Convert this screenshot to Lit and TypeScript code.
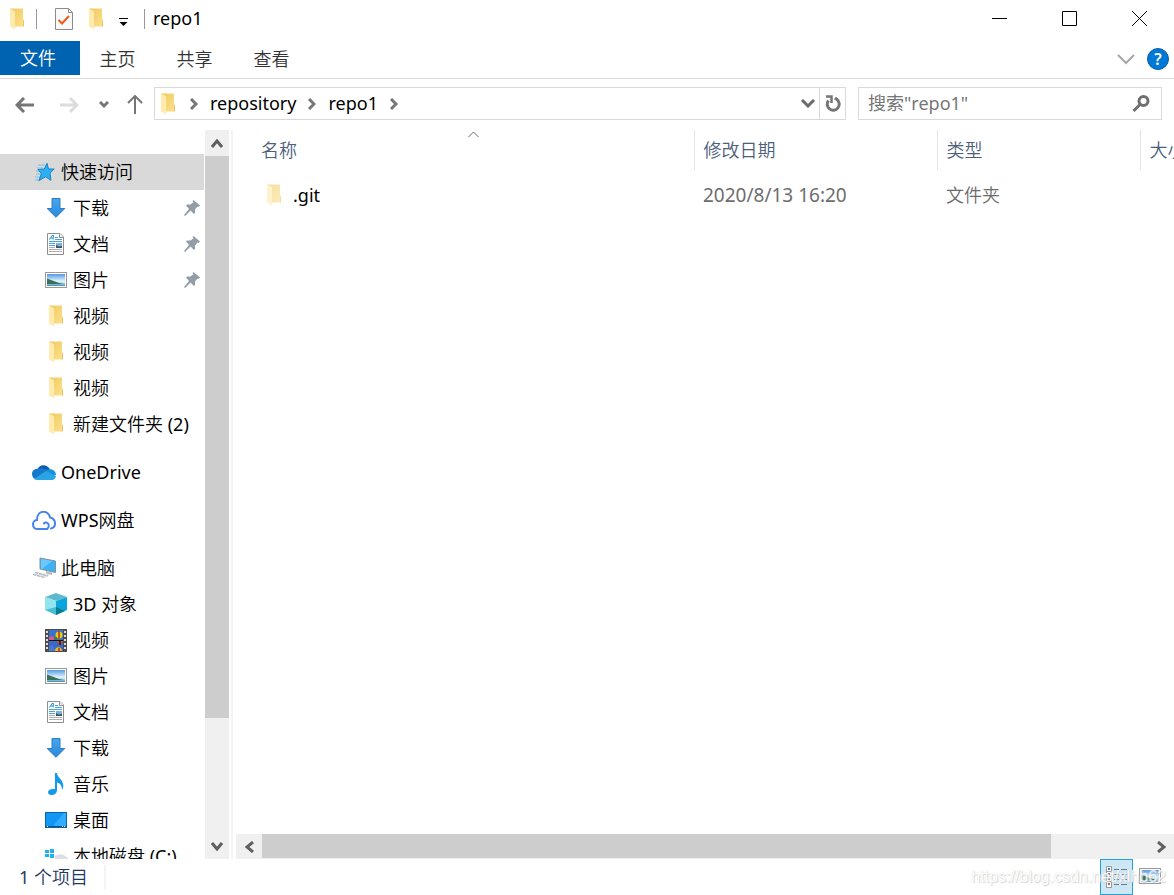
import { LitElement, html, css, nothing, TemplateResult } from "lit";
import { customElement } from "lit/decorators.js";

const folder = html`<svg width="14" height="22" viewBox="0 0 14 22">
  <defs><linearGradient id="f" x1="0" y1="0" x2="1" y2="1"><stop offset="0" stop-color="#f1ca62"/><stop offset="1" stop-color="#fbe08b"/></linearGradient></defs>
  <path d="M0 0.5H13V11L14 13V18.5H3Z" fill="url(#f)"/><path d="M0 0.5L5 3.5V21.5L0 18.5Z" fill="#ffebae"/><path d="M13 11L14 13V18.5H13Z" fill="#e9c569"/></svg>`;

const icons: Record<string, TemplateResult> = {
  folder,
  star: html`<svg width="22" height="20" viewBox="0 0 22 20">
    <path d="M5 3H12M4 6H10M3 9H6M3 12H8M2 15H7M2 18H6" stroke="#7cc0e6" stroke-width="1"/>
    <path d="M14 1.300L15.500 7H21.200L17 11L18 18.300L12.500 14.800L6 18.600L8.400 11.500L5 7.500L11.300 7Z" fill="#2cb0f5" stroke="#1b83c4" stroke-width="1"/></svg>`,
  down: html`<svg width="20" height="20" viewBox="0 0 20 20"><defs><linearGradient id="d" x1="0" y1="0" x2="0" y2="1"><stop offset="0" stop-color="#4aa5ec"/><stop offset="1" stop-color="#2789dc"/></linearGradient></defs>
    <path d="M6 0.5H14V10.5H18.8L10 19.3L1.200 10.5H6Z" fill="url(#d)" stroke="#2c7fc4"/></svg>`,
  doc: html`<svg width="18" height="22" viewBox="0 0 18 22"><path d="M.5 .5H13L16.500 4V21.500H.5Z" fill="#fff" stroke="#8e8e8e"/><path d="M12.500 .5V4.500H16.500" fill="#eee" stroke="#8e8e8e"/>
    <path d="M2.500 6.500L5 2.500H6.500L6 6.500M4 5H6" fill="none" stroke="#1d8fd1"/><path d="M8 4.500H11M8 6.500H15M2 8.500H15M2 10.500H8M2 12.500H8" stroke="#48a3d9"/><path d="M9 10H15V15H9Z" fill="#7fb0d8"/><path d="M9 12L12 13.500L15 13V15H9Z" fill="#35576a"/><path d="M2 14.500H8M2 16.500H15M2 18.500H15" stroke="#b0b0b0"/></svg>`,
  pic: html`<svg width="22" height="16" viewBox="0 0 22 16"><defs><linearGradient id="p" x1="0" y1="0" x2="0" y2="1"><stop offset="0" stop-color="#5598e6"/><stop offset=".6" stop-color="#e2f4fd"/><stop offset=".8" stop-color="#a8d2e6"/><stop offset="1" stop-color="#3d83ad"/></linearGradient></defs>
    <rect x=".5" y=".5" width="21" height="15" fill="#fff" stroke="#999"/><rect x="2" y="2" width="18" height="12" fill="url(#p)"/><path d="M2 6.500L6 8L10 9.500L14 11L19 12H2Z" fill="#38705a"/></svg>`,
  onedrive: html`<svg width="24" height="16" viewBox="0 0 24 16"><path d="M5 6C7 .5 14-1 18 5L12 10L4 8Z" fill="#0b5cad"/><path d="M5 5C2 5 0 7 0 10C0 13 2 15 4 15L16 6C12 4 8 4 5 5Z" fill="#1579cd"/><path d="M14 7C18 3 24 6 24 11L12 12Z" fill="#1292df"/><path d="M2 15L14 7L24 12C23.5 14.500 22 16 20 16H5C4 16 3 15.700 2 15Z" fill="#29a5e6"/></svg>`,
  cloud: html`<svg width="24" height="19" viewBox="0 0 24 19"><g fill="none" stroke="#4583f1" stroke-width="2" stroke-linecap="round"><path d="M15 18H6C-.5 18-.5 9.500 5 9C5 -2 17-1 18 6.500C24 7.500 25 16 19 17.500"/><path d="M15 18C17 17 17.500 13.500 15.500 12C14.200 11 12.500 11.500 12 12.500"/></g></svg>`,
  pc: html`<svg width="24" height="22" viewBox="0 0 24 22"><path d="M8 1L23.500 4V15.500L8 12Z" fill="#3cb2f5" stroke="#81909a"/><path d="M9 2L20 4L10 12H9Z" fill="#6bc9ff"/><path d="M14 14V16.500L20 18V15.500" fill="#b6bec4"/><path d="M4 14.500L18 17.500L13 21L1 18Z" fill="#e2e5e7"/><path d="M3 15.500L16 19M1 17.500L12 20.500" stroke="#9daab1" stroke-dasharray="3 1"/></svg>`,
  cube: html`<svg width="22" height="22" viewBox="0 0 22 22"><path d="M11 0L22 4L11 8L0 4Z" fill="#5fb9cc"/><path d="M0 4L11 8V18L0 17Z" fill="#92e4ee"/><path d="M11 8L22 4V17L11 22Z" fill="#0aa5da"/><path d="M0 17L11 14V22Z" fill="#47bfd3"/><path d="M11 14L20 18L11 22Z" fill="#087c94"/></svg>`,
  film: html`<svg width="22" height="23" viewBox="0 0 22 23"><rect width="22" height="23" fill="#4d4d4d"/><path d="M2 2V22M20 2V22" stroke="#ddd" stroke-width="2" stroke-dasharray="2 2"/><rect x="4" y="1" width="14" height="10" fill="#3973c9"/><rect x="4" y="12" width="14" height="10" fill="#3c69c3"/>
    <circle cx="14" cy="6" r="3.500" fill="#e9c81d"/><path d="M14 2V10" stroke="#a8361f" stroke-width="1.500"/><path d="M4 8L8 7L10 11H4Z" fill="#d45a9c"/><path d="M9 8H12V11H9Z" fill="#477a2c"/><path d="M12 12H18L16 15H14Z" fill="#d84e1d"/><path d="M14 12H16V16H14Z" fill="#4c231c"/><path d="M10 22C10 17 17 17 17 22Z" fill="#f0be20"/><path d="M13 19H15V22H13Z" fill="#cf4a1a"/><path d="M4 18L8 16L10 22H4Z" fill="#4a78d8"/><rect x="4" y="11" width="14" height="1" fill="#171717"/></svg>`,
  music: html`<svg width="16" height="22" viewBox="0 0 16 22"><path d="M7 0H9C9 5 17 7 15 15L14 17C14 12 11.500 10 9 9.500V17C9 20 6.500 22 3.500 22C-.5 22-1 18 2 16.500C4 15.500 6 16 7 16Z" fill="#139aeb"/></svg>`,
  desk: html`<svg width="22" height="16" viewBox="0 0 22 16"><rect x=".5" y=".5" width="21" height="15" fill="#1298f4" stroke="#0768ac"/><path d="M8 14L19 1H21V14Z" fill="#31adff"/><path d="M1 14.500H21" stroke="#094f88"/><path d="M2 14.500H3M17 14.500H18M19 14.500H20" stroke="#fff"/></svg>`,
  disk: html`<svg width="24" height="22" viewBox="0 0 24 22"><path d="M1 5H5V8H1ZM6 4H10V8H6ZM1 9H5V12H1ZM6 9H10V13H6Z" fill="#1eb3ee"/><path d="M11 11Q15 8 20 10L24 13V20H1V14H11Z" fill="#dedfe3"/></svg>`,
};

const line = (d: string, w: number, h: number, color: string, sw = 2) =>
  html`<svg width=${w} height=${h} viewBox="0 0 ${w} ${h}"><path d=${d} fill="none" stroke=${color} stroke-width=${sw}/></svg>`;

// Latin runs are set a step heavier than the Chinese text around them.
const mixed = (text: string) =>
  text.split(/([\x20-\x7e]+)/).filter(Boolean).map((run) => (/^[\x20-\x7e]/.test(run) ? html`<span class="latin">${run}</span>` : run));

const pin = html`<svg width="16" height="16" viewBox="0 0 16 16"><path d="M9.500 0L16 5.500L14.500 7L13.500 6.500L11 9.500V13L10 14L6.500 10.500L1 16L0 15L5 9L2 5.500L3 4.500H6.500L9.500 2.200L8.500 1Z" fill="#929da6"/></svg>`;

interface Item { icon: string; label: string; pinned?: boolean; root?: boolean; gap?: boolean; current?: boolean }
const items: Item[] = [
  { icon: "star", label: "快速访问", root: true, current: true },
  { icon: "down", label: "下载", pinned: true },
  { icon: "doc", label: "文档", pinned: true },
  { icon: "pic", label: "图片", pinned: true },
  { icon: "folder", label: "视频" },
  { icon: "folder", label: "视频" },
  { icon: "folder", label: "视频" },
  { icon: "folder", label: "新建文件夹 (2)" },
  { icon: "onedrive", label: "OneDrive", root: true, gap: true },
  { icon: "cloud", label: "WPS网盘", root: true, gap: true },
  { icon: "pc", label: "此电脑", root: true, gap: true },
  { icon: "cube", label: "3D 对象" },
  { icon: "film", label: "视频" },
  { icon: "pic", label: "图片" },
  { icon: "doc", label: "文档" },
  { icon: "down", label: "下载" },
  { icon: "music", label: "音乐" },
  { icon: "desk", label: "桌面" },
  { icon: "disk", label: "本地磁盘 (C:)" },
];

const base = css`
  :host, * { box-sizing: border-box; }
  svg { display: block; flex: none; }
  button { border: 0; padding: 0; margin: 0; background: none; font: inherit; color: inherit; display: flex; align-items: center; justify-content: center; flex: none; }
  a { color: inherit; text-decoration: none; }
  .latin { font-weight: 400; }
`;

@customElement("title-bar")
class TitleBar extends LitElement {
  static styles = [base, css`
    :host { display: flex; height: 41px; align-items: flex-start; }
    .quick { display: flex; align-items: center; height: 38px; padding-left: 10px; flex: 1; }
    .sep { width: 1px; height: 20px; background: #999; }
    .first { margin: 0 18px 0 12px; }
    .new { margin: 0 16px; }
    .more { margin-right: 16px; padding-top: 6px; }
    h1 { font-size: 18px; margin: 0 0 2px 8px; line-height: 24px; }
    .win { width: 70px; height: 37px; }
  `];
  render() {
    return html`
      <div class="quick">
        ${folder}<span class="sep first"></span>
        <button aria-label="属性"><svg width="18" height="22" viewBox="0 0 18 22"><path d="M.5 .5H13.500L17.500 4.500V21.500H.5Z" fill="#f9f9f9" stroke="#8b8b8b"/><path d="M13.500 .5V4.500H17.500" fill="none" stroke="#8b8b8b"/><path d="M3.500 12L7 15.500L14 8" fill="none" stroke="#ee5a1c" stroke-width="2"/></svg></button>
        <button class="new" aria-label="新建文件夹">${folder}</button>
        <button class="more" aria-label="自定义快速访问工具栏"><svg width="9" height="8" viewBox="0 0 9 8"><path d="M0 .5H9" stroke="#000"/><path d="M.5 4H8.500L4.500 8Z"/></svg></button>
        <span class="sep"></span><h1 class="latin">repo1</h1>
      </div>
      <button class="win" aria-label="最小化">${line("M0 7.5H15", 15, 15, "#000", 1)}</button>
      <button class="win" aria-label="最大化">${line("M.5 .5H14.5V14.5H.5Z", 15, 15, "#000", 1)}</button>
      <button class="win" aria-label="关闭">${line("M0 0L15 15M15 0L0 15", 15, 15, "#000", 1)}</button>`;
  }
}

@customElement("ribbon-tabs")
class RibbonTabs extends LitElement {
  static styles = [base, css`
    :host { display: flex; height: 38px; border-bottom: 1px solid #d9dadc; color: #333; }
    nav { display: flex; flex: 1; }
    .tab { height: 36px; width: 77px; padding-right: 2px; }
    .file { background: #0063b1; color: #fff; width: 80px; height: 34px; padding-right: 4px; }
    .fold { margin-right: 12px; height: 36px; }
    .help { width: 22px; height: 22px; border-radius: 50%; background: #0078d7; border: 1px solid #0a5ea5; color: #fff; margin: 7px 5px 0 0; font-size: 16px; line-height: 20px; font-weight: 600; }
  `];
  render() {
    return html`<nav>
        <button class="tab file">文件</button><button class="tab">主页</button><button class="tab">共享</button><button class="tab">查看</button>
      </nav>
      <button class="fold" aria-label="展开功能区">${line("M1 1L9 9L17 1", 18, 11, "#a6a6a6")}</button>
      <button class="help" aria-label="帮助">?</button>`;
  }
}

@customElement("address-bar")
class AddressBar extends LitElement {
  static styles = [base, css`
    :host { display: flex; height: 51px; padding: 8px 12px 10px 0; }
    .nav { display: flex; width: 154px; align-items: center; padding: 2px 0 0 15px; flex: none; }
    .fwd { margin-left: 26px; }
    .recent { margin-left: 20px; }
    .up { margin-left: 18px; }
    .path { display: flex; align-items: center; flex: 1; border: 1px solid #d9d9d9; padding-left: 6px; min-width: 0; }
    .path a { line-height: 24px; margin: 0 12px 2px; }
    .arrow { margin-left: 15px; }
    .space { flex: 1; }
    .drop { margin-right: 4px; }
    .reload { border-left: 1px solid #d9d9d9; width: 26px; align-self: stretch; padding-left: 2px; }
    .search { display: flex; align-items: center; width: 304px; margin-left: 12px; border: 1px solid #d9d9d9; padding: 0 11px 0 9px; }
    input { flex: 1; min-width: 0; border: 0; padding: 0 0 2px; outline: 0; background: none; font: inherit; font-weight: 400; line-height: 24px; color: #767676; }
    input::placeholder { color: #767676; opacity: 1; }
  `];
  render() {
    const next = line("M1 1L6 6L1 11", 8, 12, "#777", 3);
    return html`
      <div class="nav">
        <button aria-label="后退">${line("M9 1L2 8L9 15M2 8H19", 19, 16, "#767676", 3)}</button>
        <button class="fwd" aria-label="前进">${line("M10 1L17 8L10 15M17 8H0", 19, 16, "#dcdcdc", 3)}</button>
        <button class="recent" aria-label="最近的位置">${line("M1 1L5 5L9 1", 10, 8, "#767676", 3)}</button>
        <button class="up" aria-label="上移">${line("M1 8L8 1L15 8M8 1V19", 16, 19, "#767676")}</button>
      </div>
      <div class="path">
        ${folder}<span class="arrow">${next}</span><a class="latin" href="#">repository</a>${next}<a class="latin" href="#">repo1</a>${next}
        <span class="space"></span>
        <button class="drop" aria-label="展开路径">${line("M1 1L7 7L13 1", 14, 9, "#6b6b6b", 3)}</button>
        <button class="reload" aria-label="刷新"><svg width="17" height="18" viewBox="0 0 17 18"><path d="M3.500 5.500A6 6 0 1 0 12 4.500L10 3" fill="none" stroke="#757575" stroke-width="3"/><path d="M1 1.500H6.500V8" fill="none" stroke="#757575" stroke-width="2.500"/></svg></button>
      </div>
      <div class="search"><input aria-label="搜索" placeholder='搜索"repo1"'>
        <button aria-label="开始搜索"><svg width="18" height="18" viewBox="0 0 18 18"><circle cx="11.500" cy="6" r="4.500" fill="none" stroke="#6f6f6f" stroke-width="3"/><path d="M8 9.500L1.500 16" stroke="#6f6f6f" stroke-width="3"/></svg></button>
      </div>`;
  }
}

@customElement("nav-tree")
class NavTree extends LitElement {
  static styles = [base, css`
    :host { display: flex; width: 229px; flex: none; min-height: 0; }
    ul { list-style: none; margin: 0; padding: 24px 1px 0 0; flex: 1; overflow: hidden; }
    a { display: flex; align-items: center; height: 36px; padding: 0 4px 0 45px; color: #000; line-height: 24px; white-space: nowrap; }
    .icon { width: 22px; display: flex; justify-content: center; flex: none; margin-right: 6px; }
    .root { padding-left: 33px; }
    .gap { margin-top: 12px; }
    .current { background: #d9d9d9; }
    .label { flex: 1; }
    .bar { width: 24px; display: flex; flex-direction: column; background: #f0f0f0; flex: none; }
    .bar button { height: 26px; }
    .track { flex: 1; }
    .thumb { height: 83%; background: #cdcdcd; }
  `];
  render() {
    return html`<ul>${items.map((i) => html`<li class=${i.gap ? "gap" : ""}>
        <a href="#" class="${i.root ? "root" : ""} ${i.current ? "current" : ""}"><span class="icon">${icons[i.icon]}</span><span class="label">${mixed(i.label)}</span>${i.pinned ? pin : nothing}</a></li>`)}</ul>
      <div class="bar"><button aria-label="向上滚动">${line("M1 8L6 2L11 8", 12, 9, "#606060", 3)}</button>
        <div class="track"><div class="thumb"></div></div>
        <button aria-label="向下滚动">${line("M1 1L6 7L11 1", 12, 9, "#606060", 3)}</button></div>`;
  }
}

@customElement("file-list")
class FileList extends LitElement {
  static styles = [base, css`
    :host { display: flex; flex-direction: column; flex: 1; min-width: 0; margin-left: 2px; border-left: 2px solid #f4f4f4; padding-left: 3px; }
    .view { flex: 1; overflow: hidden; position: relative; }
    table { border-collapse: collapse; table-layout: fixed; width: 1100px; }
    th { font-weight: inherit; text-align: left; height: 40px; padding: 0 0 0 9px; color: #4c607a; border-right: 1px solid #e3e3e3; line-height: 24px; }
    td { height: 36px; padding: 0 0 0 9px; color: #6d6d6d; line-height: 24px; }
    .when { font-size: 19px; }
    tbody::before { content: ""; display: block; height: 7px; }
    .name { width: 458px; padding-left: 25px; }
    .date { width: 243px; }
    .type { width: 203px; }
    .file { display: flex; align-items: center; gap: 12px; color: #000; padding-left: 6px; }
    .file svg { opacity: .6; }
    .sort { position: absolute; left: 232px; top: 1px; }
    .bar { display: flex; height: 25px; background: #f0f0f0; }
    .bar button { width: 26px; }
    .track { flex: 1; padding-bottom: 1px; }
    .thumb { width: 89%; height: 100%; background: #cdcdcd; }
  `];
  render() {
    return html`<div class="view"><table>
        <thead><tr><th class="name">名称</th><th class="date">修改日期</th><th class="type">类型</th><th>大小</th></tr></thead>
        <tbody><tr><td class="name"><a href="#" class="file latin">${folder}.git</a></td><td class="when latin">2020/8/13 16:20</td><td>文件夹</td><td></td></tr></tbody>
      </table><span class="sort">${line("M.5 6L5.500 1L10.500 6", 11, 7, "#666", 1)}</span></div>
      <div class="bar"><button aria-label="向左滚动">${line("M8 1L2 6L8 11", 9, 12, "#606060", 3)}</button>
        <div class="track"><div class="thumb"></div></div>
        <button aria-label="向右滚动">${line("M1 1L7 6L1 11", 9, 12, "#606060", 3)}</button></div>`;
  }
}

@customElement("status-bar")
class StatusBar extends LitElement {
  static styles = [base, css`
    :host { display: flex; height: 36px; align-items: center; padding-left: 19px; color: #1f3a5f; position: relative; }
    .count { line-height: 24px; flex: 1; padding-bottom: 1px; }
    .total { border-right: 2px solid #f4f4f4; padding-right: 16px; }
    .mode { width: 33px; height: 36px; }
    .on { background: #cce8f7; border: 1px solid #26a0da; }
    .large { margin-right: 8px; padding-bottom: 2px; }
    .mark { position: absolute; right: 8px; top: 8px; font: 16px/20px "Liberation Sans", Arial, sans-serif; color: #fff; text-shadow: 0 0 1px #ccc, 1px 1px 1px #ccc; opacity: .8; }
  `];
  render() {
    return html`<div class="count"><span class="total">${mixed("1 个项目")}</span></div>
      <button class="mode on" aria-label="详细信息"><svg width="22" height="22" viewBox="0 0 22 22"><path d="M.5 .5H5.500V21.500H.5ZM.5 5.500H5.500M.5 10.500H5.500M.5 15.500H5.500" fill="#fff" stroke="#999"/><path d="M2 3H4M2 13H4" stroke="#3b7cc0" stroke-width="2"/><path d="M2 8H4M2 18H4" stroke="#a66" stroke-width="2"/><path d="M8 3.500H13M15 3.500H21M8 8.500H13M15 8.500H21M8 13.500H13M15 13.500H21M8 18.500H13M15 18.500H21" stroke="#777"/></svg></button>
      <button class="mode large" aria-label="大图标">${icons.pic}</button>
      <span class="mark">https://blog.csdn.net/xlhb62</span>`;
  }
}

@customElement("app-root")
class AppRoot extends LitElement {
  static styles = css`
    :host { display: flex; flex-direction: column; height: 100vh; overflow: hidden; background: #fff; color: #000; font: 350 18px/24px "Noto Sans", "Noto Sans CJK SC", sans-serif; }
    main { display: flex; flex: 1; min-height: 0; }
  `;
  render() {
    return html`<title-bar></title-bar><ribbon-tabs></ribbon-tabs><address-bar></address-bar>
      <main><nav-tree></nav-tree><file-list></file-list></main><status-bar></status-bar>`;
  }
}
